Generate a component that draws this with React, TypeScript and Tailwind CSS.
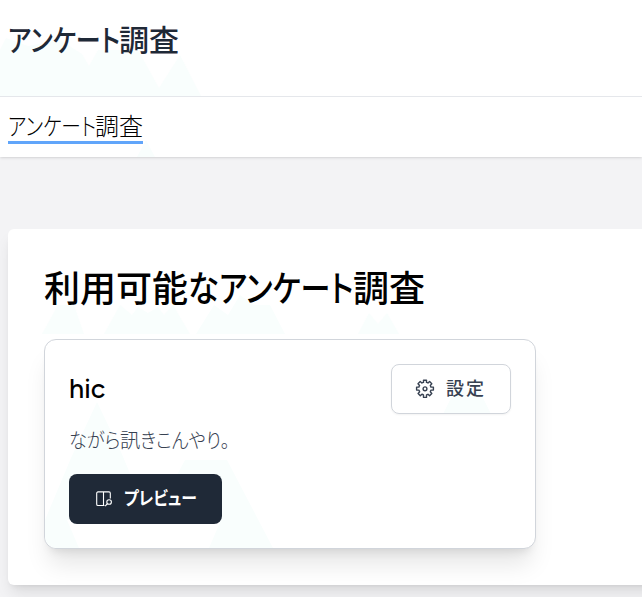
import type { ReactNode } from 'react'
import clsx from 'clsx'

function Kana({ width, scale, children }: { width: string; scale: string; children: ReactNode }) {
  return (
    <span className={clsx("inline-block whitespace-nowrap [font-feature-settings:'palt']", width)}>
      <span className={clsx('inline-block origin-left', scale)}>{children}</span>
    </span>
  )
}

function Peaks({ points, className }: { points: string[]; className?: string }) {
  return (
    <svg className={clsx('pointer-events-none absolute inset-0 h-full w-full fill-[#f9fefd]', className)} aria-hidden="true">
      {points.map((p) => (
        <polygon key={p} points={p} />
      ))}
    </svg>
  )
}

function GearIcon() {
  return (
    <svg className="size-[20px] shrink-0" viewBox="0 0 20 20" fill="none" stroke="currentColor" strokeWidth="1.4" strokeLinejoin="round">
      <path d="M8.5 1.3h3v2.1q.9.2 1.5.6l1.6-1.5 2.2 2.2L15.3 6.4q.4.8.6 1.7h2.5v3h-2.5q-.2.9-.6 1.7l1.5 1.7-2.2 2.2-1.6-1.5q-.7.5-1.5.7v2.5h-3v-2.5q-.8-.2-1.6-.7l-1.6 1.5-2.2-2.2 1.6-1.7q-.5-.8-.7-1.7H1.6v-3h2.3q.2-.9.7-1.7L3 4.7l2.2-2.2L6.9 4q.7-.4 1.6-.6z" />
      <circle cx="10" cy="9.8" r="1.9" />
    </svg>
  )
}

function PreviewIcon() {
  return (
    <svg className="size-[18px] shrink-0" viewBox="0 0 18 18" fill="none" stroke="currentColor" strokeWidth="1.1">
      <path d="M9.5 15.5H3a1.3 1.3 0 0 1-1.3-1.3V3.2A1.3 1.3 0 0 1 3 1.9h11a1.3 1.3 0 0 1 1.3 1.3v5.2M8.5 2v13.5" />
      <circle cx="14.1" cy="12" r="2.3" />
      <path d="m12.4 13.7-2.2 2.5" />
    </svg>
  )
}

export default function App() {
  return (
    <div className="h-[597px] w-[642px] overflow-hidden bg-[#f3f3f5] font-['Noto_Sans_CJK_JP',sans-serif] text-black">
      <div className="relative bg-white shadow">
        <Peaks
          points={[
            '0,96 0,50 6,38 28,46 60,40 82,54 89,66 98,50 138,50 159,88 180,55 201,96',
            '137,157 146,140 155,157',
          ]}
        />
        <header className="relative flex h-[97px] items-start border-b border-[#e5e7eb] pt-[18px] pl-2">
          <h1 className="text-[30px] leading-10 font-medium text-[#1f2937]">
            <Kana width="w-[111px]" scale="scale-x-[0.835]">アンケート</Kana>調査
          </h1>
        </header>
        <nav className="relative flex h-[60px] items-start pt-3 pl-2">
          <a className="h-[35px] w-[135px] border-b-[3px] border-[#60a5fa] text-[24px] leading-[31px] font-light whitespace-nowrap">
            <Kana width="w-[87px]" scale="scale-x-[0.82]">アンケート</Kana>調査
          </a>
        </nav>
      </div>

      <main className="mt-[72px] ml-2">
        <section className="relative h-[356px] w-[660px] rounded-md bg-white px-9 pt-[32px] shadow-lg">
          <Peaks
            points={[
              '34,105 50,76 66,76 76,105',
              '96,105 112,76 124,86 130,78 140,84 150,78 156,86 165,76 182,105',
              '188,105 206,76 220,86 232,66 246,76 262,76 277,105',
              '350,105 361,84 370,95 379,84 391,105',
            ]}
          />
          <h2 className="relative text-[36px] leading-[50px] font-medium whitespace-nowrap">
            利用可能<Kana width="w-[31px]" scale="scale-x-[0.87]">な</Kana>
            <Kana width="w-[134px]" scale="scale-x-[0.835]">アンケート</Kana>調査
          </h2>

          <article className="relative mt-[28px] h-[210px] w-[492px] rounded-xl border border-[#d1d5db] bg-white px-6 pt-6 shadow-xl">
            <Peaks
              className="rounded-xl"
              points={[
                '0,208 0,180 26,118 52,62 76,112 92,150 124,150 140,120 182,120 228,208 164,208 176,180 22,180 34,208',
                '398,74 410,50 434,50 446,74',
              ]}
            />
            <div className="relative flex h-[50px] items-center justify-between">
              <h3 className="font-[Figtree,Lato,sans-serif] text-[27px] leading-8 font-medium">hic</h3>
              <button className="flex h-[50px] w-[120px] items-center rounded-lg border border-[#d1d5db] pl-[23px] text-[18px] font-medium tracking-[2px] text-[#374151] shadow-xs">
                <GearIcon />
                <span className="ml-[11px] pb-[3px]">設定</span>
              </button>
            </div>
            <p className="relative mt-[11px] h-[30px] text-[20px] leading-[30px] font-light whitespace-nowrap text-[#374151]">
              <Kana width="w-[51px]" scale="scale-x-[0.91]">ながら</Kana>訊
              <Kana width="w-[90px]" scale="scale-x-[0.91]">きこんやり。</Kana>
            </p>
            <button className="relative mt-[19px] flex h-[50px] w-[153px] items-center rounded-lg bg-[#1f2937] pl-[26px] text-[18px] font-bold text-white">
              <PreviewIcon />
              <span className="ml-[11px] pb-[3px]">
                <Kana width="w-[74px]" scale="scale-x-[0.88]">プレビュー</Kana>
              </span>
            </button>
          </article>
        </section>
      </main>
    </div>
  )
}
